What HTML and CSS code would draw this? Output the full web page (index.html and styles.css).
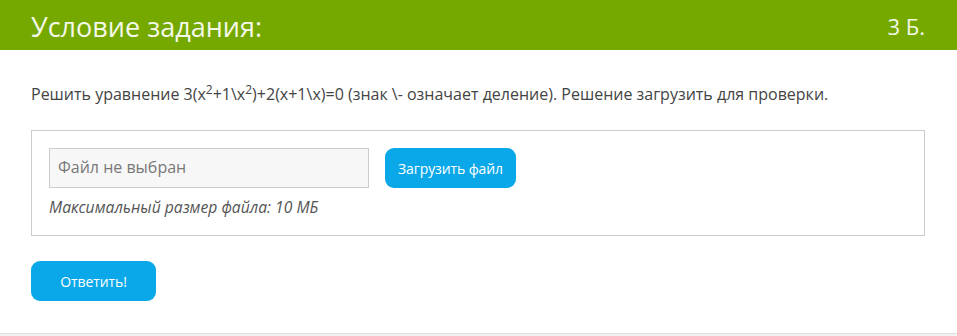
FILE: index.html
```html
<!DOCTYPE html>
<html lang="ru">
<head>
<meta charset="utf-8">
<link rel="stylesheet" href="styles.css">
</head>
<body>
<div class="task">
  <header class="task-head">
    <h1 class="task-title">Условие задания:</h1>
    <span class="task-score">3 Б.</span>
  </header>
  <div class="task-body">
    <p class="task-text">Решить уравнение 3(x<sup>2</sup>+1\x<sup>2</sup>)+2(x+1\x)=0 (знак \- означает деление). Решение загрузить для проверки.</p>
    <div class="upload">
      <div class="upload-row">
        <div class="file-field">Файл не выбран</div>
        <button class="btn btn-upload">Загрузить файл</button>
      </div>
      <div class="upload-note">Максимальный размер файла: 10 МБ</div>
    </div>
    <button class="btn btn-answer">Ответить!</button>
  </div>
  <div class="task-foot"></div>
</div>
</body>
</html>
```
FILE: styles.css
```css
html, body {
  margin: 0;
  padding: 0;
  background: #fff;
}
body {
  font-family: "Open Sans", "Liberation Sans", sans-serif;
  color: #444;
  width: 957px;
  height: 336px;
  overflow: hidden;
}
.task-head {
  height: 50px;
  background: #76a900;
  display: flex;
  align-items: center;
  justify-content: space-between;
  padding: 2px 32px 0 31px;
  box-sizing: border-box;
}
.task-title {
  margin: 0;
  font-size: 27px;
  font-weight: 400;
  color: #f4f8ea;
  line-height: 1;
}
.task-score {
  font-size: 22px;
  color: #f4f8ea;
}
.task-body {
  padding: 32px 32px 0 31px;
  height: 283px;
  box-sizing: border-box;
}
.task-text {
  margin: 0 0 24px;
  font-size: 16px;
  line-height: 24px;
  color: #444;
}
.task-text sup {
  font-size: 12px;
  line-height: 0;
  vertical-align: 6px;
}
.upload {
  border: 1px solid #ccc;
  padding: 17px 17px 16px;
  height: 106px;
  box-sizing: border-box;
}
.upload-row {
  display: flex;
  gap: 16px;
  align-items: center;
}
.file-field {
  width: 320px;
  height: 40px;
  box-sizing: border-box;
  border: 1px solid #ccc;
  background: #f7f7f7;
  color: #777;
  font-size: 16px;
  line-height: 36px;
  padding: 0 8px;
}
.btn {
  border: none;
  background: #0aa8e8;
  color: #fff;
  font-family: "Open Sans", "Liberation Sans", sans-serif;
  font-size: 14px;
  border-radius: 9px;
  height: 40px;
  padding: 0;
  letter-spacing: -0.1px;
}
.btn-upload {
  width: 131px;
}
.upload-note {
  margin-top: 8px;
  font-style: italic;
  font-size: 15.7px;
  line-height: 22px;
  color: #555;
}
.btn-answer {
  margin-top: 25px;
  width: 125px;
  display: block;
}
.task-foot {
  height: 3px;
  border-top: 1px solid #ddd;
  background: #f2f2f2;
}
```
